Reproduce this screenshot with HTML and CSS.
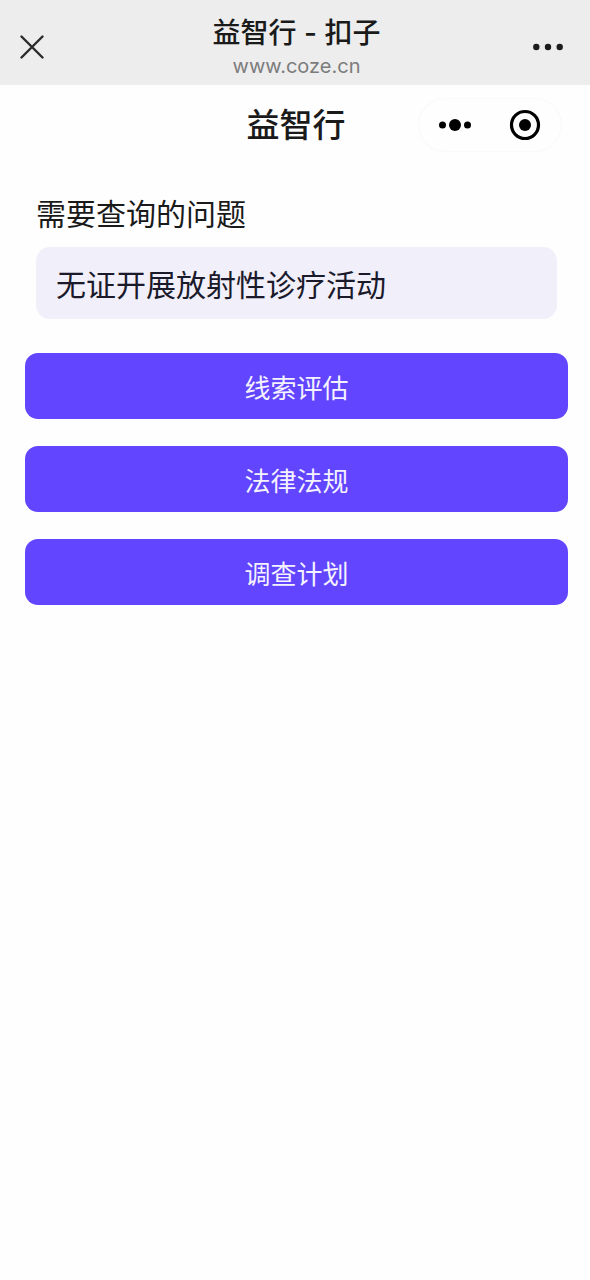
FILE: index.html
```html
<!DOCTYPE html>
<html lang="zh-CN">
<head>
<meta charset="utf-8">
<meta name="viewport" content="width=device-width, initial-scale=1">
<title>益智行 - 扣子</title>
<link rel="stylesheet" href="styles.css">
</head>
<body>
<header class="browser-bar">
  <button class="icon-button" type="button" aria-label="关闭">
    <svg width="24" height="24" viewBox="0 0 24 24" fill="none" stroke="#2b2b2b" stroke-width="2.4" stroke-linecap="round"><path d="M1.5 1.5 22.5 22.5M22.5 1.5 1.5 22.5"/></svg>
  </button>
  <div class="browser-heading">
    <div class="browser-title">益智行 - 扣子</div>
    <div class="browser-url">www.coze.cn</div>
  </div>
  <button class="icon-button icon-button-end" type="button" aria-label="更多">
    <svg width="30" height="8" viewBox="0 0 30 8" fill="#1c1c1c"><circle cx="3.3" cy="4" r="3.2"/><circle cx="15" cy="4" r="3.2"/><circle cx="26.7" cy="4" r="3.2"/></svg>
  </button>
</header>
<div class="app-bar">
  <h1 class="app-title">益智行</h1>
  <div class="capsule">
    <button class="icon-button" type="button" aria-label="菜单">
      <svg width="32" height="14" viewBox="0 0 32 14" fill="#000"><circle cx="3.5" cy="7" r="3.5"/><circle cx="16" cy="7" r="6"/><circle cx="28.5" cy="7" r="3.5"/></svg>
    </button>
    <button class="icon-button" type="button" aria-label="退出">
      <svg width="32" height="32" viewBox="0 0 32 32"><circle cx="16" cy="16" r="13.5" fill="none" stroke="#000" stroke-width="3.2"/><circle cx="16" cy="16" r="6"/></svg>
    </button>
  </div>
</div>
<main>
  <form class="query-form">
    <div class="field">
      <label class="field-label" for="question">需要查询的问题</label>
      <input class="field-input" id="question" type="text" value="无证开展放射性诊疗活动">
    </div>
    <button class="action" type="button">线索评估</button>
    <button class="action" type="button">法律法规</button>
    <button class="action" type="button">调查计划</button>
  </form>
</main>
</body>
</html>
```
FILE: styles.css
```css
* {
  box-sizing: border-box;
}

body {
  margin: 0;
  background: #fefefe;
  color: #1a1a1a;
  font-family: Inter, "Noto Sans CJK SC", sans-serif;
}

button,
input {
  font: inherit;
  border: 0;
}

.icon-button {
  display: flex;
  padding: 0;
  background: none;
}

.icon-button-end {
  justify-self: end;
  margin-right: 10px;
}

.browser-bar {
  display: grid;
  grid-template-columns: 1fr auto 1fr;
  align-items: center;
  padding: 13px 17px 5px 20px;
  background: #ededed;
}

.browser-heading {
  text-align: center;
}

.browser-title {
  font-size: 28px;
  font-weight: 500;
  line-height: 40px;
}

.browser-url {
  color: #7c7c7c;
  font-size: 20px;
  line-height: 27px;
}

.app-bar {
  display: grid;
  grid-template-columns: 1fr auto 1fr;
  align-items: center;
  padding: 13px 28px 12px 30px;
}

.app-title {
  grid-column: 2;
  margin: 0;
  font-size: 33px;
  font-weight: 500;
  line-height: 48px;
}

.capsule {
  display: flex;
  align-items: center;
  justify-self: end;
  gap: 38px;
  padding: 10px 20px;
  border: 1px solid #f9f9f9;
  border-radius: 28px;
}

.query-form {
  display: flex;
  flex-direction: column;
  gap: 27px;
  padding: 28px 22px 28px 25px;
}

.field {
  display: flex;
  flex-direction: column;
  gap: 11px;
  margin-bottom: 7px;
  padding: 0 11px;
}

.field-label {
  font-size: 30px;
  line-height: 44px;
}

.field-input {
  width: 100%;
  height: 72px;
  padding: 0 20px;
  border-radius: 14px;
  background: #f1effa;
  color: #1b1a2b;
  font-size: 30px;
}

.action {
  padding: 17px 20px 11px;
  border-radius: 13px;
  background: #6145ff;
  color: #f5f2ff;
  font-size: 26px;
  line-height: 38px;
}
```
